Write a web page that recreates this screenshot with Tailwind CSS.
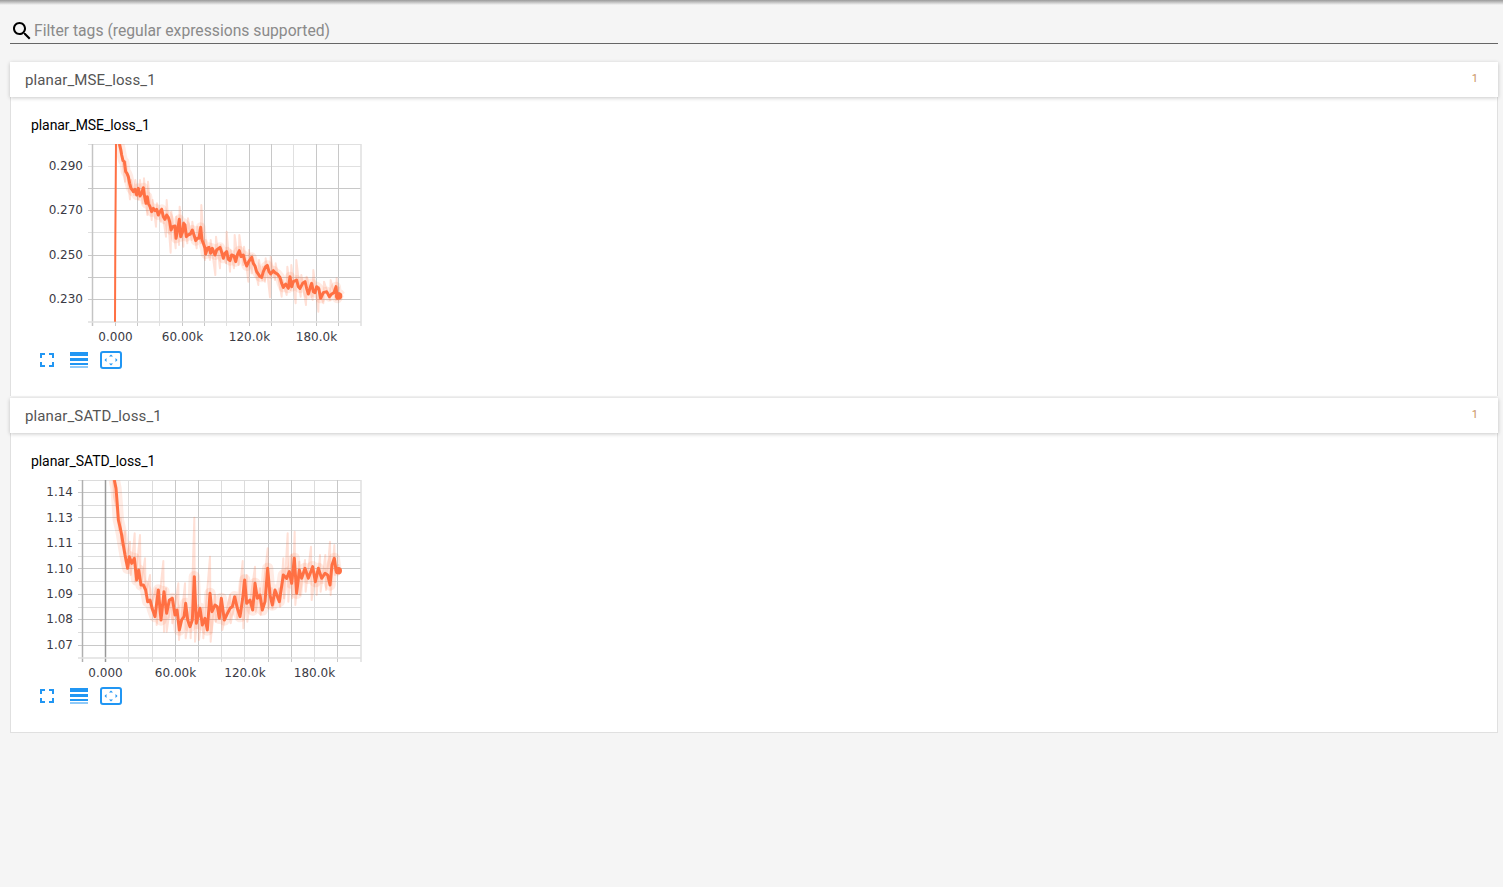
<!DOCTYPE html>
<html lang="en">
<head>
<meta charset="utf-8">
<title>Scalars</title>
<script src="https://cdn.jsdelivr.net/npm/@tailwindcss/browser@4"></script>
</head>
<body class="bg-[#f5f5f5] h-[887px] overflow-hidden font-['Roboto',sans-serif]">
<div class="h-[5px] bg-gradient-to-b from-[#9a9a9a] to-[#f5f5f5]"></div>
<div class="mx-[10px] w-[1488px]">
  <div class="flex items-center h-[39px] pt-[13px] border-b border-[#666] mb-[18px]">
    <svg class="w-6 h-6 shrink-0 text-black" viewBox="0 0 24 24" fill="currentColor"><path d="M15.5 14h-.79l-.28-.27C15.41 12.59 16 11.11 16 9.5 16 5.91 13.09 3 9.5 3S3 5.91 3 9.5 5.91 16 9.5 16c1.61 0 3.09-.59 4.23-1.57l.27.28v.79l5 4.99L20.49 19l-4.99-5zm-6 0C7.01 14 5 11.99 5 9.5S7.01 5 9.5 5 14 7.01 14 9.5 11.99 14 9.5 14z"/></svg>
    <span class="text-[15.7px] text-[#8a8a8a] whitespace-nowrap">Filter tags (regular expressions supported)</span>
  </div>

  <!-- card 1 -->
  <section class="mb-[2px]">
    <header class="relative z-10 h-[35px] pt-[1px] bg-white flex items-center justify-between pl-[15px] pr-[20px] shadow-[0_1px_4px_rgba(0,0,0,0.22)]">
      <span class="text-[15px] tracking-[0.12px] text-[#555]">planar_MSE_loss_1</span>
      <span class="text-[11px] text-[#c9925f] mb-[2px]">1</span>
    </header>
    <div class="h-[299px] bg-white border-x border-[#e0e0e0] pl-[19px] pt-[19px]">
      <div class="text-sm tracking-[-0.08px] leading-[18px] text-black pl-px">planar_MSE_loss_1</div>
      <svg class="block mt-[6px] w-[340px] h-[208px] font-['DejaVu_Sans',sans-serif] text-xs fill-[#3a3a44]" viewBox="30 140 340 208">
        <defs><clipPath id="c1"><rect x="92" y="144" width="269" height="178"/></clipPath></defs>
        <path d="M88 166.500H361M88 232.500H361M88 144.500H361M159.500 144V326M226.500 144V326M293.500 144V326" stroke="#e0e0e0" fill="none"/>
        <path d="M88 188.500H361M88 210.500H361M88 255.500H361M88 277.500H361M88 299.500H361M137.500 144V326M182.500 144V326M204.500 144V326M249.500 144V326M271.500 144V326M316.500 144V326M338.500 144V326M115.500 144V326" stroke="#c8c8c8" fill="none"/>
        <path d="M92.500 144V326" stroke="#c4c4c4" stroke-width="1.500" fill="none"/>
        <path d="M88 322H361M361 144V326" stroke="#e0e0e0" stroke-width="1.500" fill="none"/>
        <g clip-path="url(#c1)">
          <g transform="translate(30 140) scale(.33333)" fill="none" stroke-linejoin="round">
            <path stroke="#ff7043" stroke-opacity=".22" stroke-width="6" d="M272 12L285 125L287 65L300 178L303 120L312 165L316 120L325 178L330 120L338 190L342 115L352 225L354 125L365 240L368 180L378 260L381 190L392 245L395 205L408 290L410 180L422 338L424 215L437 325L439 230L447 315L449 200L460 320L462 245L472 310L474 235L485 300L487 245L500 325L502 260L512 310L514 195L525 360L527 300L540 360L542 300L556 405L558 290L570 385L572 315L588 370L590 275L600 395L602 330L612 385L614 285L626 375L628 285L640 375L642 320L655 425L657 330L665 400L667 345L685 435L687 360L697 420L699 380L705 425L707 355L720 472L722 350L735 420L737 370L755 470L757 420L770 465L772 380L782 450L784 375L797 490L799 360L812 470L814 405L828 495L830 410L848 480L850 390L865 515L867 440L880 490L882 425L900 480L902 420L918 480L920 415L925 480L927 440"/>
            <path id="m1" stroke="#ff7043" stroke-opacity=".14" stroke-width="30" d="M268 12L272 28L275 45L279 62L283 65L287 95L291 100L295 110L299 130L303 145L307 150L310 155L315 148L320 165L325 145L330 168L335 160L340 143L344 170L348 190L352 170L355 190L360 200L365 215L370 205L375 212L380 208L385 225L390 215L395 208L400 230L405 238L410 225L415 232L419 245L423 270L428 260L435 258L438 295L443 270L448 238L452 290L458 275L461 250L465 255L469 290L474 285L481 282L487 270L492 285L497 302L502 295L507 295L512 262L516 300L520 310L525 325L527 342L532 325L537 322L542 340L547 325L555 345L560 330L570 322L576 340L580 355L585 340L590 335L595 358L600 362L605 345L612 348L617 365L622 345L628 332L633 350L640 345L645 365L650 378L656 365L665 352L670 370L675 378L680 395L690 410L695 412L700 395L707 380L712 376L717 395L722 402L730 392L735 398L742 402L750 412L755 430L760 442L767 432L775 445L780 410L785 440L790 425L800 420L805 440L810 445L818 430L825 425L830 445L835 462L840 445L845 430L850 455L855 458L860 440L866 445L872 475L880 458L890 455L898 470L905 462L912 458L918 440L922 475L928 462L933 468"/>
            <path stroke="#ff7043" stroke-width="6" d="M255 545L256 300L258 12"/>
            <path stroke="#ff7043" stroke-width="9" d="M268 12L272 28L275 45L279 62L283 65L287 95L291 100L295 110L299 130L303 145L307 150L310 155L315 148L320 165L325 145L330 168L335 160L340 143L344 170L348 190L352 170L355 190L360 200L365 215L370 205L375 212L380 208L385 225L390 215L395 208L400 230L405 238L410 225L415 232L419 245L423 270L428 260L435 258L438 295L443 270L448 238L452 290L458 275L461 250L465 255L469 290L474 285L481 282L487 270L492 285L497 302L502 295L507 295L512 262L516 300L520 310L525 325L527 342L532 325L537 322L542 340L547 325L555 345L560 330L570 322L576 340L580 355L585 340L590 335L595 358L600 362L605 345L612 348L617 365L622 345L628 332L633 350L640 345L645 365L650 378L656 365L665 352L670 370L675 378L680 395L690 410L695 412L700 395L707 380L712 376L717 395L722 402L730 392L735 398L742 402L750 412L755 430L760 442L767 432L775 445L780 410L785 440L790 425L800 420L805 440L810 445L818 430L825 425L830 445L835 462L840 445L845 430L850 455L855 458L860 440L866 445L872 475L880 458L890 455L898 470L905 462L912 458L918 440L922 475L928 462L933 468"/>
            <circle cx="926" cy="468" r="11" fill="#ff7043"/>
          </g>
        </g>
        <g text-anchor="end"><text x="83" y="170">0.290</text><text x="83" y="214">0.270</text><text x="83" y="259">0.250</text><text x="83" y="303">0.230</text></g>
        <g text-anchor="middle"><text x="115.500" y="341">0.000</text><text x="182.500" y="341">60.00k</text><text x="249.500" y="341">120.0k</text><text x="316.500" y="341">180.0k</text></g>
      </svg>
      <div class="flex items-center h-6 pl-[5px] text-[#2196f3]">
        <svg class="w-6 h-6 shrink-0" viewBox="0 0 24 24" fill="currentColor"><path d="M7 14H5v5h5v-2H7v-3zm-2-4h2V7h3V5H5v5zm12 7h-3v2h5v-5h-2v3zM14 5v2h3v3h2V5h-5z"/></svg>
        <svg class="ml-[11px] w-[18px] h-6 shrink-0" viewBox="0 0 18 24" fill="currentColor"><path d="M0 4h18v4H0zM0 10h18v3H0zM0 15h18v2H0zM0 18.500h18v1H0z"/></svg>
        <svg class="ml-[12px] w-[22px] h-6 shrink-0" viewBox="0 0 22 24" fill="currentColor"><rect x="1" y="4" width="20" height="16" rx="2" fill="none" stroke="currentColor" stroke-width="2"/><path d="M9 8.500h4L11 6.500zM9 15.500h4L11 17.500zM6.500 10v4L4.500 12zM15.500 10v4l2-2z"/></svg>
      </div>
    </div>
  </section>

  <!-- card 2 -->
  <section>
    <header class="relative z-10 h-[35px] pt-[1px] bg-white flex items-center justify-between pl-[15px] pr-[20px] shadow-[0_1px_4px_rgba(0,0,0,0.22)]">
      <span class="text-[15px] tracking-[0.12px] text-[#555]">planar_SATD_loss_1</span>
      <span class="text-[11px] text-[#c9925f] mb-[2px]">1</span>
    </header>
    <div class="h-[300px] bg-white border-x border-b border-[#e0e0e0] pl-[19px] pt-[19px]">
      <div class="text-sm tracking-[-0.08px] leading-[18px] text-black pl-px">planar_SATD_loss_1</div>
      <svg class="block mt-[6px] w-[340px] h-[208px] font-['DejaVu_Sans',sans-serif] text-xs fill-[#3a3a44]" viewBox="30 476 340 208">
        <defs><clipPath id="c2"><rect x="82" y="480" width="279" height="178"/></clipPath></defs>
        <path d="M78 480.500H361M78 505.500H361M78 530.500H361M78 556.500H361M78 581.500H361M78 607.500H361M78 632.500H361M128.500 480V662M152.500 480V662M221.500 480V662M244.500 480V662M314.500 480V662" stroke="#dcdcdc" fill="none"/>
        <path d="M78 492.500H361M78 517.500H361M78 543.500H361M78 568.500H361M78 594.500H361M78 619.500H361M78 645.500H361M175.500 480V662M198.500 480V662M268.500 480V662M291.500 480V662M337.500 480V662" stroke="#c8c8c8" fill="none"/>
        <path d="M82.500 480V662" stroke="#b0b0b0" stroke-width="1.500" fill="none"/>
        <path d="M105.500 480V662" stroke="#999" stroke-width="1.500" fill="none"/>
        <path d="M78 658H361M361 480V662" stroke="#e0e0e0" stroke-width="1.500" fill="none"/>
        <g clip-path="url(#c2)">
          <g transform="translate(30 475) scale(.33333)" fill="none" stroke-linejoin="round">
            <path stroke="#ff7043" stroke-opacity=".22" stroke-width="6" d="M250 15L252 65L265 120L267 165L272 130L274 210L285 170L287 260L300 200L302 300L314 175L316 320L330 180L332 340L345 250L347 360L360 300L362 400L378 340L380 450L400 258L402 470L408 340L410 470L425 365L427 445L445 325L447 495L465 325L467 490L480 400L482 490L493 128L495 500L505 390L507 495L518 400L520 490L540 245L542 500L555 360L557 440L575 370L577 465L600 360L602 445L620 360L622 430L638 258L640 460L650 300L652 440L675 275L677 410L690 340L692 420L713 220L715 400L725 340L727 400L748 340L750 395L760 250L762 370L773 175L775 380L785 240L787 370L794 170L796 390L808 260L810 360L825 255L827 350L843 215L845 375L858 290L860 360L870 240L872 350L886 240L888 345L900 200L902 360L913 210L915 300L925 270L927 300"/>
            <path stroke="#ff7043" stroke-opacity=".14" stroke-width="34" d="M253 15L258 40L262 90L265 135L271 160L275 180L279 205L285 240L293 280L298 245L305 265L313 250L320 315L326 285L333 330L340 330L347 345L353 380L360 375L368 405L375 425L385 345L393 435L402 350L410 415L418 375L427 370L435 420L441 405L448 465L455 435L462 425L467 385L473 435L480 455L487 435L493 305L499 445L510 400L517 450L525 430L532 465L540 355L546 410L555 390L562 395L568 430L574 370L583 435L590 420L600 400L607 395L614 365L622 400L630 425L638 370L644 315L650 385L660 375L668 405L675 325L682 370L690 360L697 405L705 380L713 280L720 360L727 390L735 345L748 380L760 300L770 310L778 290L785 325L793 250L800 355L808 285L815 310L825 280L835 310L848 275L856 320L865 280L875 310L885 295L893 300L900 330L906 270L913 250L918 285L930 288"/>
            <path stroke="#ff7043" stroke-width="9" d="M253 15L258 40L262 90L265 135L271 160L275 180L279 205L285 240L293 280L298 245L305 265L313 250L320 315L326 285L333 330L340 330L347 345L353 380L360 375L368 405L375 425L385 345L393 435L402 350L410 415L418 375L427 370L435 420L441 405L448 465L455 435L462 425L467 385L473 435L480 455L487 435L493 305L499 445L510 400L517 450L525 430L532 465L540 355L546 410L555 390L562 395L568 430L574 370L583 435L590 420L600 400L607 395L614 365L622 400L630 425L638 370L644 315L650 385L660 375L668 405L675 325L682 370L690 360L697 405L705 380L713 280L720 360L727 390L735 345L748 380L760 300L770 310L778 290L785 325L793 250L800 355L808 285L815 310L825 280L835 310L848 275L856 320L865 280L875 310L885 295L893 300L900 330L906 270L913 250L918 285L930 288"/>
            <circle cx="925" cy="287" r="11" fill="#ff7043"/>
          </g>
        </g>
        <g text-anchor="end"><text x="73" y="496">1.14</text><text x="73" y="522">1.13</text><text x="73" y="547">1.11</text><text x="73" y="573">1.10</text><text x="73" y="598">1.09</text><text x="73" y="623">1.08</text><text x="73" y="649">1.07</text></g>
        <g text-anchor="middle"><text x="105.500" y="677">0.000</text><text x="175.500" y="677">60.00k</text><text x="245" y="677">120.0k</text><text x="314.500" y="677">180.0k</text></g>
      </svg>
      <div class="flex items-center h-6 pl-[5px] text-[#2196f3]">
        <svg class="w-6 h-6 shrink-0" viewBox="0 0 24 24" fill="currentColor"><path d="M7 14H5v5h5v-2H7v-3zm-2-4h2V7h3V5H5v5zm12 7h-3v2h5v-5h-2v3zM14 5v2h3v3h2V5h-5z"/></svg>
        <svg class="ml-[11px] w-[18px] h-6 shrink-0" viewBox="0 0 18 24" fill="currentColor"><path d="M0 4h18v4H0zM0 10h18v3H0zM0 15h18v2H0zM0 18.500h18v1H0z"/></svg>
        <svg class="ml-[12px] w-[22px] h-6 shrink-0" viewBox="0 0 22 24" fill="currentColor"><rect x="1" y="4" width="20" height="16" rx="2" fill="none" stroke="currentColor" stroke-width="2"/><path d="M9 8.500h4L11 6.500zM9 15.500h4L11 17.500zM6.500 10v4L4.500 12zM15.500 10v4l2-2z"/></svg>
      </div>
    </div>
  </section>
</div>
</body>
</html>
